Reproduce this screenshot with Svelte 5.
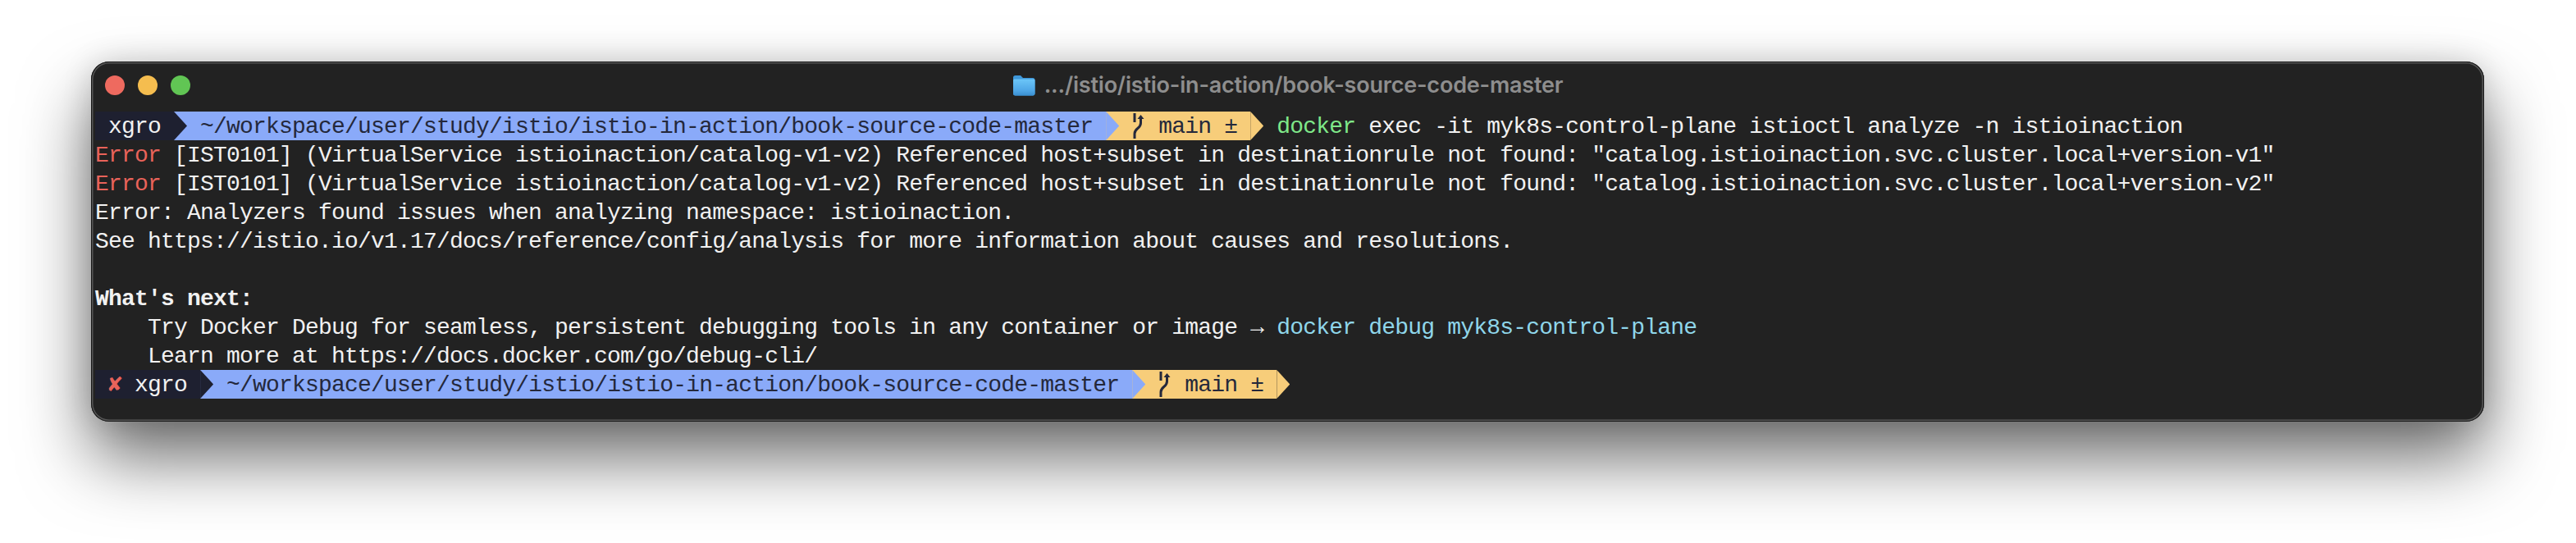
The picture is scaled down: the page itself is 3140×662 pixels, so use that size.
<script>
  const path = "~/workspace/user/study/istio/istio-in-action/book-source-code-master";
  const hostLine = (v) =>
    `[IST0101] (VirtualService istioinaction/catalog-v1-v2) Referenced host+subset in destinationrule not found: "catalog.istioinaction.svc.cluster.local+version-${v}"`;
</script>

{#snippet prompt(failed)}
  <span class="seg dark">
    {#if failed}<span class="cross">✘</span>{/if}
    <span>xgro</span>
  </span>
  <span class="arrow on-blue"><i class="tip dark"></i></span>
  <span class="seg blue">{path}</span>
  <span class="arrow on-yellow"><i class="tip blue"></i></span>
  <span class="seg yellow">
    <svg class="branch" viewBox="0 0 16 35" width="16" height="35" aria-hidden="true">
      <path d="M3 2V13" />
      <path d="M10.5 8V14C10.5 21 3 20 3 27V33" />
      <polygon points="6.5,9 14.5,9 10.5,4" />
    </svg>
    <span>main</span>
    <span>±</span>
  </span>
  <span class="arrow"><i class="tip yellow"></i></span>
{/snippet}

<div class="page">
  <div class="window">
    <header class="titlebar">
      <div class="lights">
        <span class="light red"></span>
        <span class="light amber"></span>
        <span class="light green"></span>
      </div>
      <svg class="folder" viewBox="0 0 28 26" width="28" height="26" aria-hidden="true">
        <defs>
          <linearGradient id="fold" x1="0" y1="0" x2="0" y2="1">
            <stop offset="0" stop-color="#6cc6f8" />
            <stop offset="0.7" stop-color="#4ea6e6" />
            <stop offset="1" stop-color="#3a8fd0" />
          </linearGradient>
        </defs>
        <path d="M1 3.5C1 2 2 1 3.5 1H10L13 4H25C26.5 4 27.5 5 27.5 6.5V23C27.5 24.5 26.5 25.5 25 25.5H3.5C2 25.5 1 24.5 1 23Z" fill="#3f98da" />
        <path d="M1 7C1 6 2 5.5 3 5.5H25.5C26.7 5.5 27.5 6 27.5 7V23C27.5 24.5 26.5 25.5 25 25.5H3.5C2 25.5 1 24.5 1 23Z" fill="url(#fold)" />
      </svg>
      <span class="title">.../istio/istio-in-action/book-source-code-master</span>
    </header>

    <div class="term">
      <div class="row">{@render prompt(false)}<span class="cmdline"><span class="cmd">docker</span> exec -it myk8s-control-plane istioctl analyze -n istioinaction</span></div>
      <div class="row"><span class="err">Error</span><span class="rest">{hostLine("v1")}</span></div>
      <div class="row"><span class="err">Error</span><span class="rest">{hostLine("v2")}</span></div>
      <div class="row">Error: Analyzers found issues when analyzing namespace: istioinaction.</div>
      <div class="row">See https://istio.io/v1.17/docs/reference/config/analysis for more information about causes and resolutions.</div>
      <div class="row"></div>
      <div class="row strong">What's next:</div>
      <div class="row indent"><span>Try Docker Debug for seamless, persistent debugging tools in any container or image → <span class="hint">docker debug myk8s-control-plane</span></span></div>
      <div class="row indent">Learn more at https://docs.docker.com/go/debug-cli/</div>
      <div class="row">{@render prompt(true)}</div>
    </div>
  </div>
</div>

<style>
  :global(body) {
    margin: 0;
    background: #fff;
    overflow: hidden;
  }

  .page {
    width: 3140px;
    height: 662px;
    padding: 75px 112px 0 111px;
    box-sizing: border-box;
  }

  .window {
    height: 439px;
    border-radius: 22px;
    background: #222222;
    box-sizing: border-box;
    box-shadow:
      inset 0 0 0 1px #161616,
      inset 0 0 0 2.5px #555,
      0 44px 84px rgba(0, 0, 0, 0.58),
      0 0 36px rgba(0, 0, 0, 0.14);
  }

  .titlebar {
    height: 61px;
    display: flex;
    align-items: center;
    justify-content: center;
    gap: 11px;
    position: relative;
    padding-bottom: 4px;
    box-sizing: border-box;
  }

  .lights {
    position: absolute;
    left: 17px;
    top: 17px;
    display: flex;
    gap: 16px;
  }

  .light {
    width: 24px;
    height: 24px;
    border-radius: 50%;
  }

  .red { background: #ee6a5f; }
  .amber { background: #f5bd4f; }
  .green { background: #61c554; }

  .title {
    font-family: Inter, "Noto Sans", sans-serif;
    font-size: 27px;
    font-weight: 600;
    color: #8e8e8e;
    letter-spacing: -0.2px;
  }

  .term {
    padding-left: 5px;
    font-family: "Liberation Mono", monospace;
    font-size: 28px;
    letter-spacing: -0.8px;
    color: #f1f1f1;
  }

  .row {
    height: 35px;
    line-height: 38px;
    white-space: pre;
    display: flex;
  }

  .indent { padding-left: 64px; }
  .strong { font-weight: 700; }
  .err { color: #e9635a; }
  .rest { margin-left: 16px; }
  .cmdline { margin-left: 16px; }
  .cmd { color: #7fe889; }
  .hint { color: #8fd6ea; }

  .seg {
    display: flex;
    gap: 16px;
    height: 35px;
    padding: 0 16px;
    white-space: pre;
  }

  .dark { background: #1e2030; }
  .blue { background: #8aaaf9; color: #24283b; }
  .yellow { background: #f7cd7a; color: #24283b; }

  .cross { color: #e9635a; }

  .branch {
    flex: none;
  }

  .branch path {
    fill: none;
    stroke: #24283b;
    stroke-width: 3;
  }

  .branch polygon {
    fill: #24283b;
  }

  .arrow {
    width: 16px;
    height: 35px;
    flex: none;
  }

  .on-blue { background: #8aaaf9; }
  .on-yellow { background: #f7cd7a; }

  .tip {
    display: block;
    width: 100%;
    height: 100%;
    clip-path: polygon(0 0, 100% 50%, 0 100%);
  }
</style>
